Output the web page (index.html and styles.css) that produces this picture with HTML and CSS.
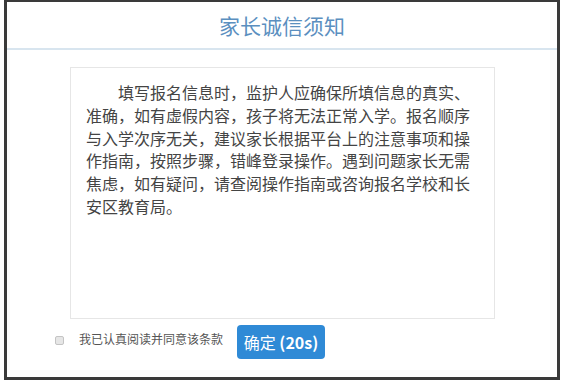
FILE: index.html
```html
<!DOCTYPE html>
<html lang="zh-CN">
<head>
  <meta charset="UTF-8" />
  <meta name="viewport" content="width=device-width, initial-scale=1" />
  <title>家长诚信须知</title>
  <link rel="stylesheet" href="styles.css">
</head>
<body>
  <div class="dialog">
    <div class="dialog-header">
      <h1>家长诚信须知</h1>
    </div>

    <div class="dialog-body">
      <div class="notice">
        <p>填写报名信息时，监护人应确保所填信息的真实、准确，如有虚假内容，孩子将无法正常入学。报名顺序与入学次序无关，建议家长根据平台上的注意事项和操作指南，按照步骤，错峰登录操作。遇到问题家长无需焦虑，如有疑问，请查阅操作指南或咨询报名学校和长安区教育局。</p>
      </div>

      <div class="agree-row">
        <label class="agree">
          <input type="checkbox" id="agree" />
          <span>我已认真阅读并同意该条款</span>
        </label>
        <button type="button" id="confirm" class="confirm-btn">确定 <b>(20s)</b></button>
      </div>
    </div>
  </div>
</body>
</html>
```

FILE: styles.css
```css
* {
  box-sizing: border-box;
  font-family: "Noto Sans CJK SC", "Noto Sans", sans-serif;
}

body {
  margin: 0;
  padding: 0;
  background: #fff;
}

.dialog {
  width: 556px;
  height: 381px;
  margin: -1px 0 0 4px;
  border: 3px solid #3a3a3a;
  background: #fff;
}

.dialog-header {
  height: 48px;
  border-bottom: 2px solid #d8e5ef;
  display: flex;
  align-items: center;
  justify-content: center;
}

.dialog-header h1 {
  margin: 0;
  font-size: 21px;
  font-weight: normal;
  color: #5b8fbf;
}

.dialog-body {
  padding: 17px 0 0 63px;
}

.notice {
  width: 425px;
  height: 252px;
  border: 1px solid #e6e6e6;
  padding: 13px 22px 0 15px;
}

.notice p {
  margin: 0;
  font-size: 16px;
  line-height: 22.8px;
  color: #444;
  text-indent: 2em;
}

.agree-row {
  display: flex;
  align-items: center;
  margin: 6px 0 0 -15px;
}

.agree {
  display: flex;
  align-items: center;
  gap: 7px;
  font-size: 12px;
  color: #555;
  margin-top: -8px;
}

.agree input {
  appearance: none;
  width: 9px;
  height: 9px;
  margin: 5px 8px 0 0;
  border: 1px solid #c4c4c4;
  border-radius: 2px;
  background: #e6e6e6;
}

.confirm-btn {
  margin-left: 14px;
  width: 88px;
  height: 34px;
  padding: 0;
  background: #2f8ad6;
  color: #fff;
  border: none;
  border-radius: 4px;
  font-size: 16px;
  cursor: pointer;
}

.confirm-btn b {
  font-weight: 600;
}
```
